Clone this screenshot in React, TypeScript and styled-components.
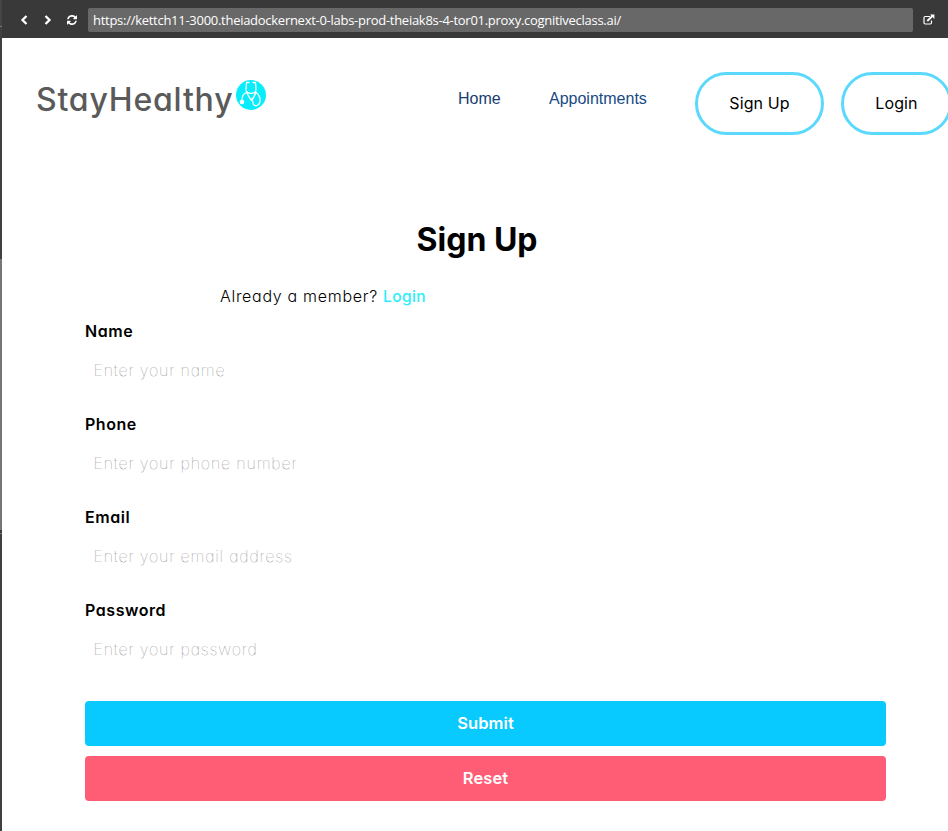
import React from "react";
import styled, { createGlobalStyle } from "styled-components";

const Global = createGlobalStyle`
  *, *::before, *::after { box-sizing: border-box; }
  html, body { margin: 0; height: 831px; overflow: hidden; background: #fff; }
  body { font-family: "Inter", "Open Sans", sans-serif; font-feature-settings: "cv11" 1, "calt" 0; color: #000; }
`;

const Shell = styled.div`
  display: grid;
  grid-template-columns: 2px 946px;
  width: 948px;
  height: 831px;
  overflow: hidden;
`;

const Gutter = styled.div`
  background: linear-gradient(
    #454545 0 26px, #777 26px 27px, #404040 27px 259px,
    #777 259px 530px, #3c3c3c 530px 533px, #777 533px 534px, #3f3f3f 534px
  );
`;

const Preview = styled.div`
  min-width: 0;
  overflow: hidden;
  background: #fff;
`;

const AddressBar = styled.div`
  display: flex;
  align-items: center;
  height: 38px;
  padding: 2px 0 0 17px;
  background: #383938;
  color: #fff;
`;

const BarIcons = styled.div`
  display: flex;
  align-items: center;
  width: 69px;
  gap: 14px;
`;

const UrlField = styled.div`
  width: 825px;
  height: 24px;
  padding: 1px 0 0 5px;
  border-radius: 2px;
  background: #686868;
  font: 400 13px/23px "Open Sans", sans-serif;
  letter-spacing: -0.275px;
  white-space: nowrap;
`;

const OpenButton = styled.div`
  display: flex;
  margin-left: 10px;
`;

const Navbar = styled.nav`
  display: flex;
  align-items: flex-start;
  width: 1000px;
  height: 147px;
  padding: 34px 0 0 34px;
`;

const Brand = styled.div`
  display: flex;
  width: 422px;
  padding-top: 5px;
`;

const BrandName = styled.span`
  width: 199.5px;
  padding-top: 1px;
  color: #5a5a5a;
  font-size: 32px;
  font-weight: 550;
  line-height: 44px;
  letter-spacing: 0.8px;
  white-space: nowrap;
`;

const BrandMark = styled.svg`
  display: block;
  flex: none;
  margin-top: 3px;
`;

const NavLink = styled.a<{ $width: number }>`
  width: ${(p) => p.$width}px;
  padding-top: 18px;
  color: ${(p) => (p.$width > 100 ? "#174a84" : "#183d70")};
  font: 400 16px/18px "Liberation Sans", sans-serif;
`;

const PillButton = styled.button<{ $width: number }>`
  flex: none;
  width: ${(p) => p.$width}px;
  height: 63px;
  margin-right: 17px;
  padding: 0 0 2px;
  border: 3px solid #5bd9fd;
  border-radius: 32px;
  background: #fff;
  color: #000;
  font: 400 16px/20px "Inter", sans-serif;
  font-feature-settings: "cv11" 1;
  letter-spacing: 0.1px;
`;

const Form = styled.form`
  display: flex;
  flex-direction: column;
  width: 801px;
  margin-left: 83px;
`;

const Title = styled.h1`
  margin: 33px 0 0 -17px;
  font-size: 32px;
  font-weight: 700;
  line-height: 44px;
  text-align: center;
  letter-spacing: 0px;
`;

const MemberNote = styled.p`
  margin: 24px 0 0 135px;
  font-size: 16px;
  font-weight: 300;
  line-height: 20px;
  letter-spacing: 0.7px;
  white-space: nowrap;
`;

const LoginLink = styled.a`
  color: #2ceefc;
  font-size: 15.5px;
  font-weight: 550;
  letter-spacing: 0.4px;
`;

const Fields = styled.div`
  height: 394px;
  padding-top: 14px;
`;

const Field = styled.div`
  height: 93px;
`;

const Label = styled.label`
  display: block;
  font-size: 16px;
  font-weight: 600;
  line-height: 20px;
  letter-spacing: 0.55px;
`;

const Input = styled.input`
  display: block;
  width: 100%;
  height: 40px;
  margin-top: 9px;
  padding: 0 8.5px;
  border: 0;
  background: transparent;
  outline: none;
  font: 100 16px/20px "Inter", sans-serif;
  font-feature-settings: "cv11" 1;
  letter-spacing: 0.82px;
  &::placeholder { color: #858585; opacity: 1; }
`;

const ActionButton = styled.button<{ $color: string }>`
  height: 45px;
  margin-bottom: 10px;
  padding: 0 0 2px;
  border: 0;
  border-radius: 4px;
  background: ${(p) => p.$color};
  color: #fff;
  font: 600 16.5px/20px "Inter", sans-serif;
  font-feature-settings: "cv11" 1;
  letter-spacing: 0.1px;
`;

const fields = [
  { label: "Name", hint: "Enter your name" },
  { label: "Phone", hint: "Enter your phone number" },
  { label: "Email", hint: "Enter your email address" },
  { label: "Password", hint: "Enter your password" },
];

const Stethoscope = () => (
  <BrandMark width="30" height="30" viewBox="0 0 30 30" fill="none">
    <circle cx="15" cy="15" r="15" fill="#08edfc" />
    <g stroke="#fff" strokeWidth="1.3" strokeLinecap="round" strokeLinejoin="round">
      <path d="M13 2.500h-2.500L10 9.500c0 2.500 2.200 3.800 5 3.800s5-1.300 5-3.800L19.500 2.500H17" />
      <path d="M10.500 12C12 15 13 17.500 15.500 20.500 18 17.500 19 15 20 12" />
      <path d="M10.500 12.500C7.500 13.500 6 16.500 6 20" />
      <path d="M20 12.500c3.500 2 5 7 3.500 10.500-1 3-4.500 3.500-6 1.500-1-1.700 0-4-2-5.500" />
    </g>
    <circle cx="6" cy="22" r="2.300" fill="#fff" />
  </BrandMark>
);

const Chevron = ({ d }: { d: string }) => (
  <svg width="10" height="10" viewBox="0 0 10 10" fill="none" stroke="#fff" strokeWidth="2.300">
    <path d={d} />
  </svg>
);

const Refresh = () => (
  <svg width="10" height="10" viewBox="0 0 1536 1536" fill="#fff">
    <path d="M1511 928q0 5-1 7-64 268-268 434.500T764 1536q-146 0-282.500-55T238 1324l-129 129q-19 19-45 19t-45-19-19-45V960q0-26 19-45t45-19h448q26 0 45 19t19 45-19 45l-137 137q71 66 161 102t187 36q134 0 250-65t186-179q11-17 53-117 8-23 30-23h192q13 0 22.500 9.500t9.500 22.500zm25-800v448q0 26-19 45t-45 19h-448q-26 0-45-19t-19-45 19-45l138-138Q969 256 768 256q-134 0-250 65T332 500q-11 17-53 117-8 23-30 23H50q-13 0-22.500-9.500T18 608v-7q65-268 270-434.500T768 0q146 0 284 55.500T1297 212l130-129q19-19 45-19t45 19 19 45z" />
  </svg>
);

const OpenExternal = () => (
  <svg width="12" height="12" viewBox="0 0 12 12" fill="none" stroke="#fff">
    <path d="M7 2.500H2.200Q1 2.500 1 3.700v5.100Q1 10 2.200 10h5.100q1.200 0 1.200-1.200V6.500" strokeWidth="1.200" />
    <path d="M4.300 7 9.500 1.900" strokeWidth="1.900" />
    <path d="M7 .6h4.400V5z" fill="#fff" stroke="none" />
  </svg>
);

export default function App() {
  return (
    <>
      <Global />
      <Shell>
        <Gutter />
        <Preview>
          <AddressBar>
            <BarIcons>
              <Chevron d="M7.500 1 3.500 5l4 4" />
              <Chevron d="m2.500 1 4 4-4 4" />
              <Refresh />
            </BarIcons>
            <UrlField>
              https://kettch11-3000.theiadockernext-0-labs-prod-theiak8s-4-tor01.proxy.cognitiveclass.ai/
            </UrlField>
            <OpenButton><OpenExternal /></OpenButton>
          </AddressBar>
          <Navbar>
            <Brand>
              <BrandName>StayHealthy</BrandName>
              <Stethoscope />
            </Brand>
            <NavLink $width={91}>Home</NavLink>
            <NavLink $width={146}>Appointments</NavLink>
            <PillButton $width={129}>Sign Up</PillButton>
            <PillButton $width={111}>Login</PillButton>
          </Navbar>
          <Form>
            <Title>Sign Up</Title>
            <MemberNote>
              Already a member? <LoginLink>Login</LoginLink>
            </MemberNote>
            <Fields>
              {fields.map((f) => (
                <Field key={f.label}>
                  <Label>{f.label}</Label>
                  <Input placeholder={f.hint} />
                </Field>
              ))}
            </Fields>
            <ActionButton type="button" $color="#08caff">Submit</ActionButton>
            <ActionButton type="button" $color="#ff5c75">Reset</ActionButton>
          </Form>
        </Preview>
      </Shell>
    </>
  );
}
